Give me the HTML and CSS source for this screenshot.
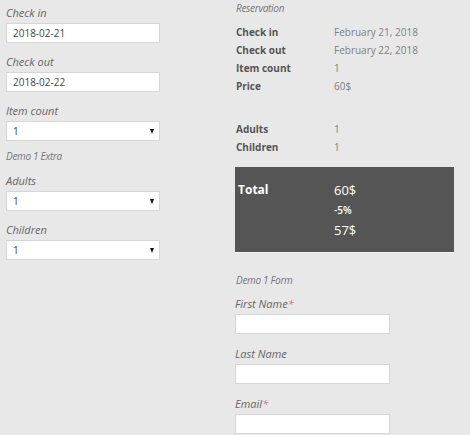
FILE: index.html
```html
<!DOCTYPE html>
<html>
<head>
    <link rel="stylesheet" href="styles.css">
</head>
<body>
    <div class="page">
        <div class="form_col">
            <label class="field_label first">Check in</label>
            <input class="field" value="2018-02-21"/>
            <label class="field_label">Check out</label>
            <input class="field" value="2018-02-22"/>
            <label class="field_label">Item count</label>
            <div class="select_wrap"><select class="field"><option>1</option></select></div>
            <div class="group_title">Demo 1 Extra</div>
            <label class="field_label tight">Adults</label>
            <div class="select_wrap"><select class="field"><option>1</option></select></div>
            <label class="field_label">Children</label>
            <div class="select_wrap"><select class="field"><option>1</option></select></div>
        </div>

        <div class="summary_col">
            <div class="summary_title">Reservation</div>
            <table class="summary">
                <tr><th>Check in</th><td>February 21, 2018</td></tr>
                <tr><th>Check out</th><td>February 22, 2018</td></tr>
                <tr><th>Item count</th><td>1</td></tr>
                <tr><th>Price</th><td>60$</td></tr>
                <tr class="spacer"><th></th><td></td></tr>
                <tr><th>Adults</th><td>1</td></tr>
                <tr><th>Children</th><td>1</td></tr>
            </table>

            <div class="total_box">
                <div class="total_label">Total</div>
                <div class="total_values">
                    <div class="total_price">60$</div>
                    <div class="total_discount">-5%</div>
                    <div class="total_price">57$</div>
                </div>
            </div>

            <div class="group_title form_title">Demo 1 Form</div>
            <label class="field_label first_name">First Name<span class="req">*</span></label>
            <input class="field"/>
            <label class="field_label wide">Last Name</label>
            <input class="field"/>
            <label class="field_label wide">Email<span class="req">*</span></label>
            <input class="field"/>
        </div>
    </div>
</body>
</html>
```

FILE: styles.css
```css
body { margin: 0; background-color: #e8e8e8; font-family: "Open Sans", Arial, sans-serif; color: #555; }
.page { display: flex; }
.form_col { width: 154px; padding-left: 6px; padding-top: 3px; display: flex; flex-direction: column; }
.summary_col { margin-left: 75px; width: 219px; display: flex; flex-direction: column; }

.field_label { display: block; font-style: italic; font-size: 11px; line-height: 20px; color: #666; margin-top: 9px; }
.field_label.first { margin-top: 0; }
.field_label.tight { margin-top: 5px; }
.field_label.first_name { margin-top: 4px; }
.field_label.wide { margin-top: 10px; }
.req { color: #e0708a; }

.field { box-sizing: border-box; display: block; width: 154px; height: 20px; margin: 0; padding: 0 6px;
    border: 1px solid #d6d6d6; background-color: #fff; font-family: "Open Sans", Arial, sans-serif;
    font-size: 10px; color: #444; outline: none; }
.summary_col .field { width: 155px; }
select.field { appearance: none; -webkit-appearance: none; border-radius: 0; }
.select_wrap { position: relative; width: 154px; }
.select_wrap::after { content: ""; position: absolute; right: 6px; top: 8px; border-left: 2.5px solid transparent;
    border-right: 2.5px solid transparent; border-top: 5px solid #111; pointer-events: none; }

.group_title { font-style: italic; font-size: 10px; line-height: 20px; color: #777; margin-top: 5px; letter-spacing: -0.3px; }
.form_title { margin-top: 17px; padding-left: 1px; }

.summary_title { font-style: italic; font-size: 10px; line-height: 16px; color: #777; padding-left: 1px; letter-spacing: -0.3px; }
.summary { border-collapse: collapse; margin-top: 7px; }
.summary th { text-align: left; font-weight: bold; font-size: 10px; color: #555; width: 98px; padding: 0 0 0 1px; height: 18px; }
.summary td { font-size: 10px; color: #808080; padding: 0; height: 18px; }
.summary .spacer th, .summary .spacer td { height: 25px; }

.total_box { margin-top: 11px; background-color: #555; color: #fff; display: flex; padding: 13px 0 12px 3px;
    border-bottom: 1px solid #f4f4f4; box-sizing: border-box; height: 86px; }
.total_label { width: 96px; font-weight: bold; font-size: 12px; line-height: 20px; }
.total_price { font-size: 13px; line-height: 20px; }
.total_discount { font-size: 10px; line-height: 20px; font-weight: 600; }
```
